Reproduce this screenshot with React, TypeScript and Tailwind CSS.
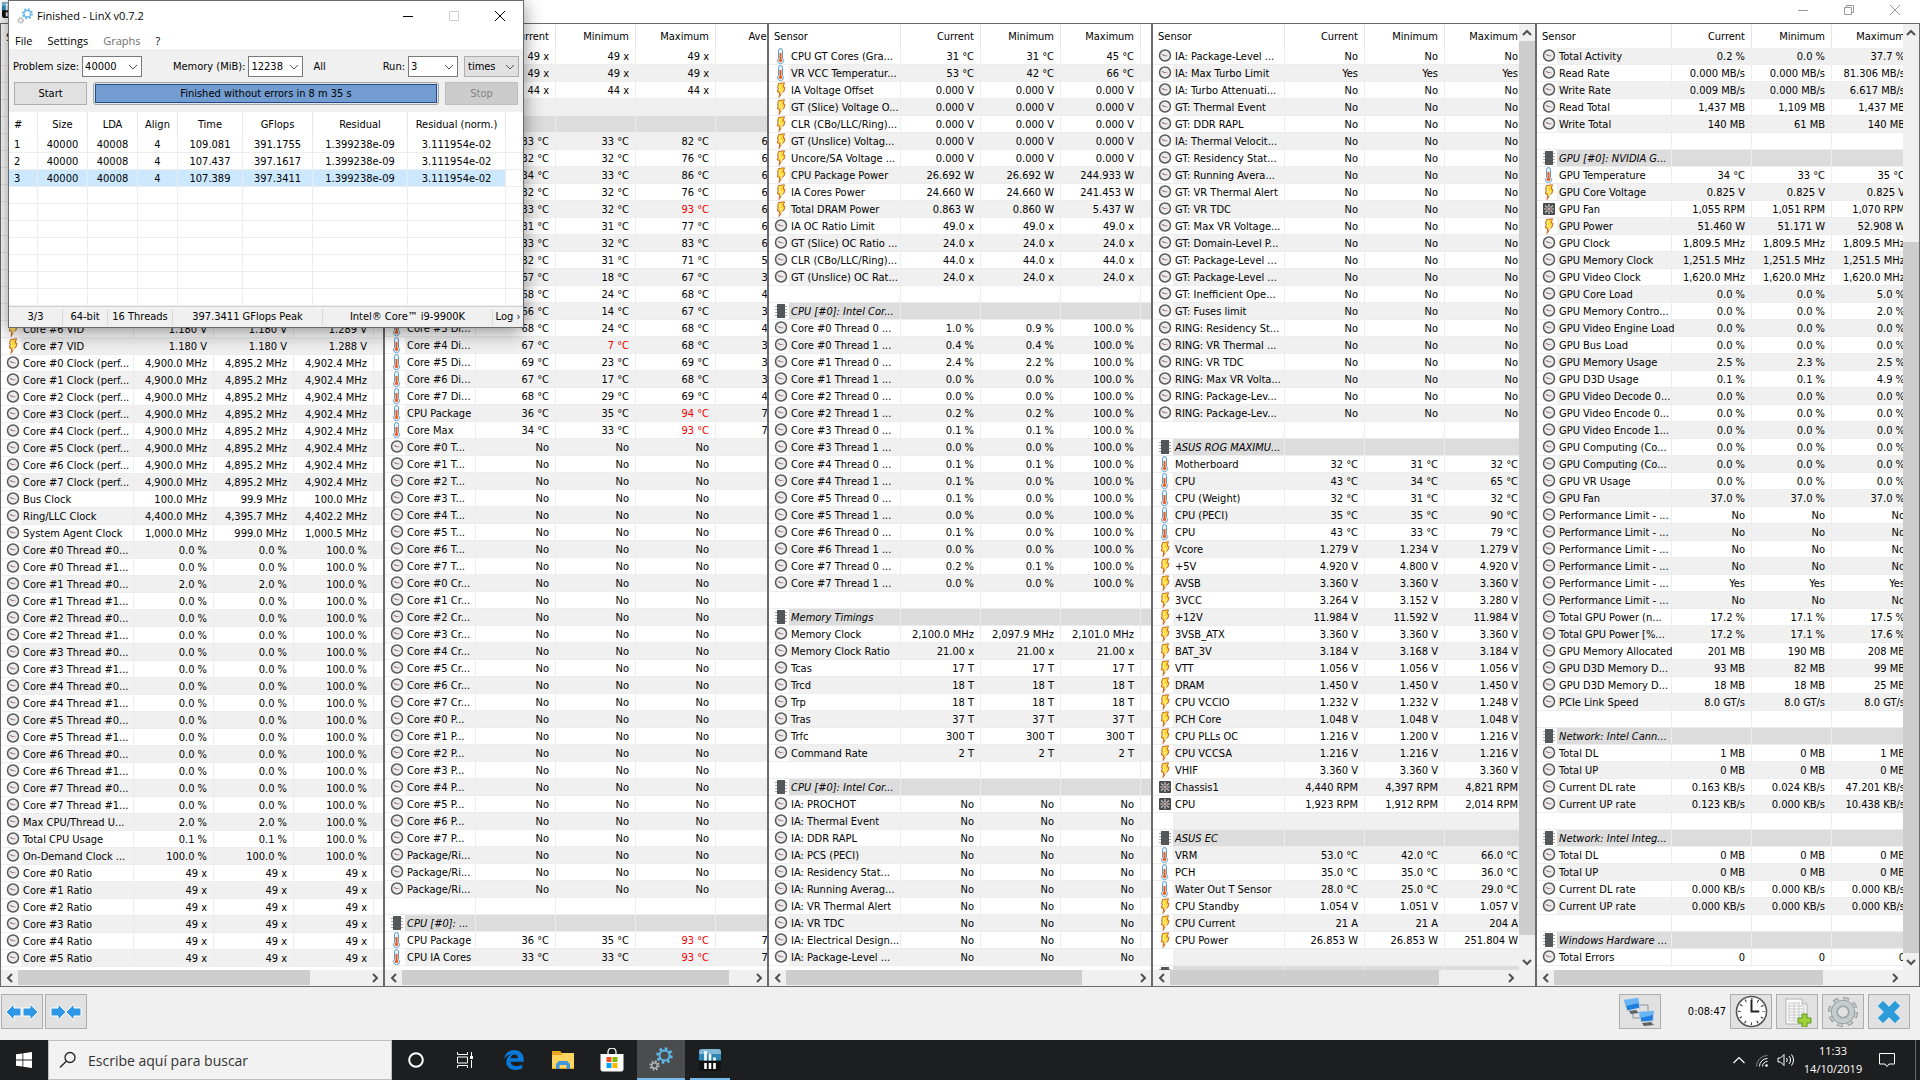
import type { ReactNode } from "react";

type IconName = "clock" | "temp" | "volt" | "fan" | "chip";

type Row = {
  kind: "row" | "group" | "blank";
  icon?: IconName;
  name?: string;
  values: string[];
  alert?: number;
};

type PaneData = {
  id: string;
  rows: Row[];
  cols: string;
  head: string;
  stripeOdd: boolean;
  thumb: number;
  vertical?: { top: number; size: number };
};

const row = (icon: IconName, name: string, values: string[], alert?: number): Row => ({ kind: "row", icon, name, values, alert });
const group = (name: string): Row => ({ kind: "group", icon: "chip", name, values: [] });
const blank = (): Row => ({ kind: "blank", values: [] });
const same = (value: string) => [value, value, value];
const unit = (suffix: string, ...values: string[]) => values.map((v) => `${v} ${suffix}`);
const no = (name: string) => row("clock", name, same("No"));
const cores = [0, 1, 2, 3, 4, 5, 6, 7];

const paneOne: Row[] = [
  ...Array.from({ length: 16 }, blank),
  row("volt", "Core #6 VID", unit("V", "1.180", "1.180", "1.289")),
  row("volt", "Core #7 VID", unit("V", "1.180", "1.180", "1.288")),
  ...cores.map((n) => row("clock", `Core #${n} Clock (perf...`, unit("MHz", "4,900.0", "4,895.2", "4,902.4"))),
  row("clock", "Bus Clock", unit("MHz", "100.0", "99.9", "100.0")),
  row("clock", "Ring/LLC Clock", unit("MHz", "4,400.0", "4,395.7", "4,402.2")),
  row("clock", "System Agent Clock", unit("MHz", "1,000.0", "999.0", "1,000.5")),
  ...cores.flatMap((n) => [
    row("clock", `Core #${n} Thread #0...`, n === 1 ? unit("%", "2.0", "2.0", "100.0") : unit("%", "0.0", "0.0", "100.0")),
    row("clock", `Core #${n} Thread #1...`, unit("%", "0.0", "0.0", "100.0")),
  ]),
  row("clock", "Max CPU/Thread U...", unit("%", "2.0", "2.0", "100.0")),
  row("clock", "Total CPU Usage", unit("%", "0.1", "0.1", "100.0")),
  row("clock", "On-Demand Clock ...", unit("%", "100.0", "100.0", "100.0")),
  ...[0, 1, 2, 3, 4, 5].map((n) => row("clock", `Core #${n} Ratio`, same("49 x"))),
];

const paneTwo: Row[] = [
  row("clock", "", same("49 x")),
  row("clock", "", same("49 x")),
  row("clock", "", same("44 x")),
  blank(),
  group(""),
  row("temp", "", unit("°C", "33", "33", "82", "60")),
  row("temp", "", unit("°C", "32", "32", "76", "60")),
  row("temp", "", unit("°C", "34", "33", "86", "60")),
  row("temp", "", unit("°C", "32", "32", "76", "60")),
  row("temp", "", unit("°C", "33", "32", "93", "60"), 2),
  row("temp", "", unit("°C", "31", "31", "77", "60")),
  row("temp", "", unit("°C", "33", "32", "83", "60")),
  row("temp", "", unit("°C", "32", "31", "71", "50")),
  row("temp", "", unit("°C", "67", "18", "67", "30")),
  row("temp", "", unit("°C", "68", "24", "68", "40")),
  row("temp", "", unit("°C", "66", "14", "67", "30")),
  row("temp", "Core #3 Di...", unit("°C", "68", "24", "68", "40")),
  row("temp", "Core #4 Di...", unit("°C", "67", "7", "68", "30"), 1),
  row("temp", "Core #5 Di...", unit("°C", "69", "23", "69", "30")),
  row("temp", "Core #6 Di...", unit("°C", "67", "17", "68", "30")),
  row("temp", "Core #7 Di...", unit("°C", "68", "29", "69", "40")),
  row("temp", "CPU Package", unit("°C", "36", "35", "94", "70"), 2),
  row("temp", "Core Max", unit("°C", "34", "33", "93", "70"), 2),
  ...cores.map((n) => no(`Core #${n} T...`)),
  ...cores.map((n) => no(`Core #${n} Cr...`)),
  ...cores.map((n) => no(`Core #${n} P...`)),
  no("Package/Ri..."),
  no("Package/Ri..."),
  no("Package/Ri..."),
  blank(),
  group("CPU [#0]: ..."),
  row("temp", "CPU Package", unit("°C", "36", "35", "93", "70"), 2),
  row("temp", "CPU IA Cores", unit("°C", "33", "33", "93", "70"), 2),
];

const threadUsage = [
  ["1.0", "0.9"], ["0.4", "0.4"], ["2.4", "2.2"], ["0.0", "0.0"],
  ["0.0", "0.0"], ["0.2", "0.2"], ["0.1", "0.1"], ["0.0", "0.0"],
  ["0.1", "0.1"], ["0.1", "0.0"], ["0.1", "0.0"], ["0.0", "0.0"],
  ["0.1", "0.0"], ["0.0", "0.0"], ["0.2", "0.1"], ["0.0", "0.0"],
];

const paneThree: Row[] = [
  row("temp", "CPU GT Cores (Gra...", unit("°C", "31", "31", "45")),
  row("temp", "VR VCC Temperatur...", unit("°C", "53", "42", "66")),
  row("volt", "IA Voltage Offset", same("0.000 V")),
  row("volt", "GT (Slice) Voltage O...", same("0.000 V")),
  row("volt", "CLR (CBo/LLC/Ring)...", same("0.000 V")),
  row("volt", "GT (Unslice) Voltag...", same("0.000 V")),
  row("volt", "Uncore/SA Voltage ...", same("0.000 V")),
  row("volt", "CPU Package Power", unit("W", "26.692", "26.692", "244.933")),
  row("volt", "IA Cores Power", unit("W", "24.660", "24.660", "241.453")),
  row("volt", "Total DRAM Power", unit("W", "0.863", "0.860", "5.437")),
  row("clock", "IA OC Ratio Limit", same("49.0 x")),
  row("clock", "GT (Slice) OC Ratio ...", same("24.0 x")),
  row("clock", "CLR (CBo/LLC/Ring)...", same("44.0 x")),
  row("clock", "GT (Unslice) OC Rat...", same("24.0 x")),
  blank(),
  group("CPU [#0]: Intel Cor..."),
  ...threadUsage.map(([cur, min], i) => row("clock", `Core #${Math.floor(i / 2)} Thread ${i % 2} ...`, unit("%", cur, min, "100.0"))),
  blank(),
  group("Memory Timings"),
  row("clock", "Memory Clock", unit("MHz", "2,100.0", "2,097.9", "2,101.0")),
  row("clock", "Memory Clock Ratio", same("21.00 x")),
  row("clock", "Tcas", same("17 T")),
  row("clock", "Trcd", same("18 T")),
  row("clock", "Trp", same("18 T")),
  row("clock", "Tras", same("37 T")),
  row("clock", "Trfc", same("300 T")),
  row("clock", "Command Rate", same("2 T")),
  blank(),
  group("CPU [#0]: Intel Cor..."),
  no("IA: PROCHOT"),
  no("IA: Thermal Event"),
  no("IA: DDR RAPL"),
  no("IA: PCS (PECI)"),
  no("IA: Residency Stat..."),
  no("IA: Running Averag..."),
  no("IA: VR Thermal Alert"),
  no("IA: VR TDC"),
  no("IA: Electrical Design..."),
  no("IA: Package-Level ..."),
];

const paneFour: Row[] = [
  no("IA: Package-Level ..."),
  row("clock", "IA: Max Turbo Limit", same("Yes")),
  no("IA: Turbo Attenuati..."),
  no("GT: Thermal Event"),
  no("GT: DDR RAPL"),
  no("IA: Thermal Velocit..."),
  no("GT: Residency Stat..."),
  no("GT: Running Avera..."),
  no("GT: VR Thermal Alert"),
  no("GT: VR TDC"),
  no("GT: Max VR Voltage..."),
  no("GT: Domain-Level P..."),
  no("GT: Package-Level ..."),
  no("GT: Package-Level ..."),
  no("GT: Inefficient Ope..."),
  no("GT: Fuses limit"),
  no("RING: Residency St..."),
  no("RING: VR Thermal ..."),
  no("RING: VR TDC"),
  no("RING: Max VR Volta..."),
  no("RING: Package-Lev..."),
  no("RING: Package-Lev..."),
  blank(),
  group("ASUS ROG MAXIMU..."),
  row("temp", "Motherboard", unit("°C", "32", "31", "32")),
  row("temp", "CPU", unit("°C", "43", "34", "65")),
  row("temp", "CPU (Weight)", unit("°C", "32", "31", "32")),
  row("temp", "CPU (PECI)", unit("°C", "35", "35", "90")),
  row("temp", "CPU", unit("°C", "43", "33", "79")),
  row("volt", "Vcore", unit("V", "1.279", "1.234", "1.279")),
  row("volt", "+5V", unit("V", "4.920", "4.800", "4.920")),
  row("volt", "AVSB", same("3.360 V")),
  row("volt", "3VCC", unit("V", "3.264", "3.152", "3.280")),
  row("volt", "+12V", unit("V", "11.984", "11.592", "11.984")),
  row("volt", "3VSB_ATX", same("3.360 V")),
  row("volt", "BAT_3V", unit("V", "3.184", "3.168", "3.184")),
  row("volt", "VTT", same("1.056 V")),
  row("volt", "DRAM", same("1.450 V")),
  row("volt", "CPU VCCIO", unit("V", "1.232", "1.232", "1.248")),
  row("volt", "PCH Core", same("1.048 V")),
  row("volt", "CPU PLLs OC", unit("V", "1.216", "1.200", "1.216")),
  row("volt", "CPU VCCSA", same("1.216 V")),
  row("volt", "VHIF", same("3.360 V")),
  row("fan", "Chassis1", unit("RPM", "4,440", "4,397", "4,821")),
  row("fan", "CPU", unit("RPM", "1,923", "1,912", "2,014")),
  blank(),
  group("ASUS EC"),
  row("temp", "VRM", unit("°C", "53.0", "42.0", "66.0")),
  row("temp", "PCH", unit("°C", "35.0", "35.0", "36.0")),
  row("temp", "Water Out T Sensor", unit("°C", "28.0", "25.0", "29.0")),
  row("volt", "CPU Standby", unit("V", "1.054", "1.051", "1.057")),
  row("volt", "CPU Current", unit("A", "21", "21", "204")),
  row("volt", "CPU Power", unit("W", "26.853", "26.853", "251.804")),
  blank(),
  group(""),
];

const paneFive: Row[] = [
  row("clock", "Total Activity", unit("%", "0.2", "0.0", "37.7")),
  row("clock", "Read Rate", unit("MB/s", "0.000", "0.000", "81.306")),
  row("clock", "Write Rate", unit("MB/s", "0.009", "0.000", "6.617")),
  row("clock", "Read Total", unit("MB", "1,437", "1,109", "1,437")),
  row("clock", "Write Total", unit("MB", "140", "61", "140")),
  blank(),
  group("GPU [#0]: NVIDIA G..."),
  row("temp", "GPU Temperature", unit("°C", "34", "33", "35")),
  row("volt", "GPU Core Voltage", same("0.825 V")),
  row("fan", "GPU Fan", unit("RPM", "1,055", "1,051", "1,070")),
  row("volt", "GPU Power", unit("W", "51.460", "51.171", "52.908")),
  row("clock", "GPU Clock", same("1,809.5 MHz")),
  row("clock", "GPU Memory Clock", same("1,251.5 MHz")),
  row("clock", "GPU Video Clock", same("1,620.0 MHz")),
  row("clock", "GPU Core Load", unit("%", "0.0", "0.0", "5.0")),
  row("clock", "GPU Memory Contro...", unit("%", "0.0", "0.0", "2.0")),
  row("clock", "GPU Video Engine Load", same("0.0 %")),
  row("clock", "GPU Bus Load", same("0.0 %")),
  row("clock", "GPU Memory Usage", unit("%", "2.5", "2.3", "2.5")),
  row("clock", "GPU D3D Usage", unit("%", "0.1", "0.1", "4.9")),
  row("clock", "GPU Video Decode 0...", same("0.0 %")),
  row("clock", "GPU Video Encode 0...", same("0.0 %")),
  row("clock", "GPU Video Encode 1...", same("0.0 %")),
  row("clock", "GPU Computing (Co...", same("0.0 %")),
  row("clock", "GPU Computing (Co...", same("0.0 %")),
  row("clock", "GPU VR Usage", same("0.0 %")),
  row("clock", "GPU Fan", same("37.0 %")),
  no("Performance Limit - ..."),
  no("Performance Limit - ..."),
  no("Performance Limit - ..."),
  no("Performance Limit - ..."),
  row("clock", "Performance Limit - ...", same("Yes")),
  no("Performance Limit - ..."),
  row("clock", "Total GPU Power (n...", unit("%", "17.2", "17.1", "17.5")),
  row("clock", "Total GPU Power [%...", unit("%", "17.2", "17.1", "17.6")),
  row("clock", "GPU Memory Allocated", unit("MB", "201", "190", "208")),
  row("clock", "GPU D3D Memory D...", unit("MB", "93", "82", "99")),
  row("clock", "GPU D3D Memory D...", unit("MB", "18", "18", "25")),
  row("clock", "PCIe Link Speed", same("8.0 GT/s")),
  blank(),
  group("Network: Intel Cann..."),
  row("clock", "Total DL", unit("MB", "1", "0", "1")),
  row("clock", "Total UP", same("0 MB")),
  row("clock", "Current DL rate", unit("KB/s", "0.163", "0.024", "47.201")),
  row("clock", "Current UP rate", unit("KB/s", "0.123", "0.000", "10.438")),
  blank(),
  group("Network: Intel Integ..."),
  row("clock", "Total DL", same("0 MB")),
  row("clock", "Total UP", same("0 MB")),
  row("clock", "Current DL rate", same("0.000 KB/s")),
  row("clock", "Current UP rate", same("0.000 KB/s")),
  blank(),
  group("Windows Hardware ..."),
  row("clock", "Total Errors", same("0")),
];

const panes: PaneData[] = [
  { id: "p1", rows: paneOne, cols: "w-[133px]", head: "h-[25px]", stripeOdd: true, thumb: 84 },
  { id: "p2", rows: paneTwo, cols: "w-[91px]", head: "h-6", stripeOdd: true, thumb: 94 },
  { id: "p3", rows: paneThree, cols: "w-[132px]", head: "h-6", stripeOdd: true, thumb: 85 },
  { id: "p4", rows: paneFour, cols: "w-[132px]", head: "h-6", stripeOdd: true, thumb: 81, vertical: { top: 0, size: 98 } },
  { id: "p5", rows: paneFive, cols: "w-[135px]", head: "h-6", stripeOdd: false, thumb: 81, vertical: { top: 22, size: 78 } },
];

function RowIcon({ name }: { name: IconName }) {
  if (name === "temp") {
    return (
      <svg viewBox="0 0 16 16" className="size-4 shrink-0">
        <path d="M5.500 2.500a2 2 0 0 1 4 0v8a3 3 0 1 1-4 0z" fill="#e4f2fb" stroke="#5f9ccb" />
        <path d="M7.500 5v7" stroke="#ee5a12" strokeWidth="2" />
        <circle cx="7.500" cy="12.500" r="1.600" fill="#ee5a12" />
      </svg>
    );
  }
  if (name === "volt") {
    return (
      <svg viewBox="0 0 16 16" className="size-4 shrink-0">
        <path d="M5.500 1.500L11.500.8 10 5l2 .2-1 4-1.500.5L6 15.500l.8-5.200-2.500-.3 1-4-.8-.3z" fill="#ffd92e" stroke="#c8682a" />
        <path d="M7 2.500L6.500 8h3L8 12" fill="none" stroke="#fff6b0" />
      </svg>
    );
  }
  if (name === "fan") {
    return (
      <svg viewBox="0 0 16 16" className="size-4 shrink-0">
        <rect x="2" y="2" width="12" height="12" rx="1" fill="#4b4b4b" />
        <path d="M8 3v3.500M8 9.500V13M3 8h3.500M9.500 8H13M4 4.500l2.500 2M12 4.500l-2.500 2M4 11.500l2.500-2M12 11.500l-2.500-2" stroke="#cfcfcf" strokeWidth="1.200" />
        <circle cx="8" cy="8" r="1.300" fill="#d9a0a0" />
      </svg>
    );
  }
  if (name === "chip") {
    return (
      <svg viewBox="0 0 16 16" className="size-4 shrink-0">
        <path d="M2 3.500h12M2 6.500h12M2 9.500h12M2 12.500h12" stroke="#a8a8a8" />
        <rect x="4" y="1" width="8" height="14" fill="#54575a" />
      </svg>
    );
  }
  return (
    <svg viewBox="0 0 16 16" className="size-4 shrink-0">
      <circle cx="8" cy="7.500" r="5.500" fill="#ebebeb" stroke="#5a5a5a" strokeWidth="1.500" />
      <path d="M5 6.500l3 1.200" stroke="#666" />
      <path d="M8 7.800h2.500" stroke="#b98a80" />
    </svg>
  );
}

function Chevron({ d }: { d: string }) {
  return (
    <svg viewBox="0 0 10 10" className="size-2.5 text-[#505050]" fill="none" stroke="currentColor" strokeWidth="2">
      <path d={d} />
    </svg>
  );
}

function HorizontalBar({ thumb }: { thumb: number }) {
  return (
    <div className="flex h-4 flex-1 bg-[#f0f0f0]">
      <button aria-label="Scroll left" className="flex w-[17px] items-center justify-center"><Chevron d="M7 1L3 5l4 4" /></button>
      <div className="flex-1"><div className="h-[15px] bg-[#cdcdcd]" style={{ width: `${thumb}%` }} /></div>
      <button aria-label="Scroll right" className="flex w-[17px] items-center justify-center"><Chevron d="M3 1l4 4-4 4" /></button>
    </div>
  );
}

function VerticalBar({ top, size }: { top: number; size: number }) {
  return (
    <div className="flex w-4 shrink-0 flex-col bg-[#f0f0f0]">
      <button aria-label="Scroll up" className="flex h-[17px] items-center justify-center"><Chevron d="M1 7l4-4 4 4" /></button>
      <div className="flex flex-1 flex-col">
        <div style={{ height: `${top}%` }} />
        <div className="bg-[#cdcdcd]" style={{ height: `${size}%` }} />
      </div>
      <button aria-label="Scroll down" className="flex h-[17px] items-center justify-center"><Chevron d="M1 3l4 4 4-4" /></button>
    </div>
  );
}

const cellBg = (item: Row, striped: boolean) => {
  if (item.kind === "group") return "bg-[#dcdcdc]";
  return striped ? "bg-[#f0f0f0]" : "bg-white";
};

function SensorPane({ pane }: { pane: PaneData }) {
  return (
    <section className="flex min-w-0 flex-1 flex-col border border-[#6a6a6e] bg-white">
      <div className="flex min-h-0 flex-1">
        <div className="min-w-0 flex-1 overflow-hidden">
          <table className="w-[460px] table-fixed border-separate border-spacing-0 leading-[14px]">
            <thead>
              <tr className={pane.head}>
                <th className={`${pane.cols} border-r border-[#e5e5e5] p-0 pt-0.5 pl-[5px] text-left font-normal`}>Sensor</th>
                {["Current", "Minimum", "Maximum", "Average"].map((label) => (
                  <th key={label} className="w-20 border-r border-[#e5e5e5] p-0 pt-0.5 pr-1.5 text-right font-normal">{label}</th>
                ))}
                <th />
              </tr>
            </thead>
            <tbody>
              {pane.rows.map((item, i) => {
                const bg = cellBg(item, (i % 2 === 1) === pane.stripeOdd);
                return (
                  <tr key={i} className="h-[17px]">
                    <td className="border-r border-b border-[#ededed] p-0">
                      <div className="flex h-4 items-center">
                        <span className="flex h-4 w-5 shrink-0 justify-end overflow-hidden bg-white">{item.icon && <RowIcon name={item.icon} />}</span>
                        <span className={`h-4 min-w-0 flex-1 pt-0.5 pl-0.5 whitespace-nowrap ${bg} ${item.kind === "group" ? "italic" : ""}`}>{item.name}</span>
                      </div>
                    </td>
                    {[0, 1, 2, 3].map((col) => (
                      <td key={col} className={`border-r border-b border-[#ededed] p-0 pt-0.5 pr-1.5 text-right whitespace-nowrap ${bg} ${item.alert === col ? "text-[#f00000]" : ""}`}>{item.values[col]}</td>
                    ))}
                    <td className={`border-b border-[#ededed] p-0 ${bg}`} />
                  </tr>
                );
              })}
            </tbody>
          </table>
        </div>
        {pane.vertical && <VerticalBar top={pane.vertical.top} size={pane.vertical.size} />}
      </div>
      <div className="flex bg-[#f0f0f0]">
        <HorizontalBar thumb={pane.thumb} />
        {pane.vertical && <div className="w-4" />}
      </div>
    </section>
  );
}

function GearsIcon({ className }: { className: string }) {
  return (
    <svg viewBox="0 0 24 24" className={className} fill="none">
      <circle cx="15.500" cy="8.500" r="7" stroke="#5cb8e8" strokeWidth="2.600" strokeDasharray="2.750 2.750" />
      <circle cx="15.500" cy="8.500" r="5" stroke="#5cb8e8" strokeWidth="2" />
      <circle cx="5.500" cy="18.500" r="4.200" stroke="#b4b4b4" strokeWidth="2" strokeDasharray="1.650 1.650" />
      <circle cx="5.500" cy="18.500" r="2.800" stroke="#b4b4b4" strokeWidth="1.500" />
    </svg>
  );
}

function MonitorBarsIcon({ className }: { className: string }) {
  return (
    <svg viewBox="0 0 22 22" className={className}>
      <rect width="22" height="22" rx="3" fill="#111" />
      <path d="M0 3a3 3 0 0 1 3-3h16a3 3 0 0 1 3 3v8.500H0z" fill="#2c87b5" />
      <path d="M0 3a3 3 0 0 1 3-3h16a3 3 0 0 1 3 3v2H0z" fill="#7fb9d6" />
      <path d="M6.500 2v9.500M11 5v6.500M15.500 8.500v3M6.500 14v6M11 14v6M15.500 14v6" stroke="#fff" strokeWidth="2.600" />
    </svg>
  );
}

function ComboBox({ id, label, value, width }: { id: string; label: string; value: string; width: string }) {
  return (
    <>
      <label htmlFor={id} className="whitespace-nowrap">{label}</label>
      <div className={`${width} ml-[3px] flex h-[21px] items-center border border-[#7a7a7a] bg-white`}>
        <input id={id} defaultValue={value} className="min-w-0 flex-1 bg-transparent pl-0.5 outline-none" />
        <button aria-label={`${label} options`} className="flex w-4 justify-center">
          <svg viewBox="0 0 10 10" className="size-2.5" fill="none" stroke="#555"><path d="M1 3l4 4 4-4" /></svg>
        </button>
      </div>
    </>
  );
}

const runColumns = [
  { label: "#", width: "w-[29px]" },
  { label: "Size", width: "w-[50px]" },
  { label: "LDA", width: "w-[50px]" },
  { label: "Align", width: "w-[40px]" },
  { label: "Time", width: "w-[65px]" },
  { label: "GFlops", width: "w-[70px]" },
  { label: "Residual", width: "w-[95px]" },
  { label: "Residual (norm.)", width: "w-[98px]" },
];

const runs = [
  ["1", "40000", "40008", "4", "109.081", "391.1755", "1.399238e-09", "3.111954e-02"],
  ["2", "40000", "40008", "4", "107.437", "397.1617", "1.399238e-09", "3.111954e-02"],
  ["3", "40000", "40008", "4", "107.389", "397.3411", "1.399238e-09", "3.111954e-02"],
  ...Array.from({ length: 7 }, () => ["", "", "", "", "", "", "", ""]),
];

function LinXWindow() {
  return (
    <div className="absolute top-0 left-2 w-[516px] border border-[#6b6b6b] bg-white shadow-[0_4px_18px_rgba(0,0,0,0.45)]">
      <div className="flex h-[29px] items-center pl-2">
        <GearsIcon className="size-4" />
        <h1 className="ml-1 flex-1 font-['Open_Sans','Noto_Sans',sans-serif] text-[11px]">Finished - LinX v0.7.2</h1>
        <button aria-label="Minimize" className="flex w-[46px] justify-center"><svg viewBox="0 0 10 10" className="size-2.5" stroke="#000"><path d="M0 5.500h10" /></svg></button>
        <button aria-label="Maximize" className="flex w-[46px] justify-center"><svg viewBox="0 0 10 10" className="size-2.5" fill="none" stroke="#ccc"><path d="M.5.5h9v9h-9z" /></svg></button>
        <button aria-label="Close" className="flex w-[46px] justify-center"><svg viewBox="0 0 10 10" className="size-2.5" stroke="#000"><path d="M0 0l10 10M10 0L0 10" /></svg></button>
      </div>
      <nav className="flex h-[19px] items-center gap-[15px] pt-0.5 pl-1.5 font-['Open_Sans','Noto_Sans',sans-serif] text-[11px]">
        <button>File</button>
        <button>Settings</button>
        <button className="text-[#6d6d6d]">Graphs</button>
        <button>?</button>
      </nav>
      <div className="bg-[#f0f0f0] px-1 pt-[7px] pb-[7px]">
        <div className="flex items-center">
          <ComboBox id="size" label="Problem size:" value="40000" width="w-[60px]" />
          <div className="flex-1" />
          <ComboBox id="memory" label="Memory (MiB):" value="12238" width="w-[55px]" />
          <button className="ml-2.5">All</button>
          <div className="w-[57px]" />
          <ComboBox id="run" label="Run:" value="3" width="w-[50px]" />
          <div className="relative ml-1.5">
            <select aria-label="Run unit" className="h-[21px] w-[55px] appearance-none border border-[#adadad] bg-[#e1e1e1] pl-[3px]"><option>times</option></select>
            <svg viewBox="0 0 10 10" className="pointer-events-none absolute top-1.5 right-1 size-2.5" fill="none" stroke="#555"><path d="M1 3l4 4 4-4" /></svg>
          </div>
        </div>
        <div className="mt-[5px] flex h-[23px] gap-1.5 px-px">
          <button className="w-[73px] border border-[#adadad] bg-[#e1e1e1]">Start</button>
          <div role="progressbar" aria-valuenow={100} className="flex flex-1 rounded-[3px] border border-[#a5a5a5] bg-[#e6e6e6] p-px">
            <div className="flex flex-1 items-center justify-center border border-[#1f4a8c] bg-[#739dd0]">Finished without errors in 8 m 35 s</div>
          </div>
          <button disabled className="w-[73px] border border-[#bfbfbf] bg-[#ccc] text-[#838383]">Stop</button>
        </div>
      </div>
      <table className="w-full table-fixed border-separate border-spacing-0 leading-[14px]">
        <thead>
          <tr className="h-6">
            {runColumns.map((col, i) => (
              <th key={col.label} className={`${col.width} border-r border-[#e5e5e5] p-0 pt-0.5 font-normal whitespace-nowrap ${i === 0 ? "pl-[5px] text-left" : ""}`}>{col.label}</th>
            ))}
            <th />
          </tr>
        </thead>
        <tbody>
          {runs.map((cells, r) => (
            <tr key={r} className="h-[17px]">
              {cells.map((cell, i) => (
                <td key={i} className={`h-[17px] border-r border-b border-[#ededed] p-0 pt-0.5 ${i === 0 ? "pl-[5px]" : "text-center"} ${r === 2 ? "bg-[#cce8ff]" : ""}`}>{cell}</td>
              ))}
              <td className="border-b border-[#ededed]" />
            </tr>
          ))}
        </tbody>
      </table>
      <footer className="flex h-[21px] items-center border-t border-[#d0d0d0] bg-[#f0f0f0] text-center whitespace-nowrap">
        <span className="w-[54px] border-r border-[#d7d7d7]">3/3</span>
        <span className="w-[45px] border-r border-[#d7d7d7]">64-bit</span>
        <span className="w-[65px] border-r border-[#d7d7d7]">16 Threads</span>
        <span className="w-[150px] border-r border-[#d7d7d7]">397.3411 GFlops Peak</span>
        <span className="w-[170px] border-r border-[#d7d7d7]">Intel® Core™ i9-9900K</span>
        <button className="flex-1">Log ›</button>
      </footer>
    </div>
  );
}

function ToolButton({ label, children }: { label: string; children: ReactNode }) {
  return <button aria-label={label} className="flex h-[35px] w-[42px] items-center justify-center border border-[#adadad] bg-[#e1e1e1]">{children}</button>;
}

function Toolbar() {
  return (
    <div className="flex h-[53px] items-start gap-1 bg-[#f0f0f0] pt-[7px] pr-2.5 pl-px">
      <div className="flex gap-0.5">
        <ToolButton label="Expand columns">
          <svg viewBox="0 0 34 18" className="h-[18px] w-[34px]" fill="#2f97e8" stroke="#fff"><path d="M1 9l8-8v4h7v8H9v4zM33 9l-8-8v4h-7v8h7v4z" /></svg>
        </ToolButton>
        <ToolButton label="Shrink columns">
          <svg viewBox="0 0 34 18" className="h-[18px] w-[34px]" fill="#2f97e8" stroke="#fff"><path d="M17 9L9 1v4H2v8h7v4zM17 9l8-8v4h7v8h-7v4z" /></svg>
        </ToolButton>
      </div>
      <div className="flex-1" />
      <ToolButton label="Remote monitoring">
        <svg viewBox="0 0 34 30" className="h-[30px] w-[34px]">
          <path d="M16 8h9v7M10 14v7h8" fill="none" stroke="#8a8f94" />
          <path d="M1 3l14-2 2 10-13 3z" fill="#1f7fdc" stroke="#c9d4dc" />
          <path d="M1 3l14-2 1 5L3 9z" fill="#69b4f5" />
          <path d="M6 14l7-1 3 3-8 1z" fill="#5b6268" />
          <path d="M16 15l15-1-1 10-12 1z" fill="#1f7fdc" stroke="#c9d4dc" />
          <path d="M16 15l15-1-1 4-13 3z" fill="#69b4f5" />
          <path d="M19 26l9-1 3 3-10 1z" fill="#5b6268" />
        </svg>
      </ToolButton>
      <span className="flex h-[35px] w-[61px] items-center justify-end">0:08:47</span>
      <ToolButton label="Reset timer">
        <svg viewBox="0 0 34 34" className="size-[33px]" fill="none" stroke="#222">
          <circle cx="17" cy="17" r="15.500" fill="#fff" strokeWidth="1.600" stroke="#555" />
          <circle cx="17" cy="17" r="12.500" strokeWidth="3" strokeDasharray="1 5.545" strokeDashoffset=".5" />
          <path d="M17 5v12h8" strokeWidth="2" />
        </svg>
      </ToolButton>
      <ToolButton label="Log to file">
        <svg viewBox="0 0 30 30" className="size-[30px]">
          <path d="M4 2h16l5 5v20H4z" fill="#fafafa" stroke="#b4b4b4" />
          <path d="M20 2v5h5" fill="#e2e2e2" stroke="#b4b4b4" />
          <path d="M7 6h11M7 9h15M7 12h15M7 15h15M7 18h15M7 21h15M7 24h15M7 6v18M12 6v18M17 6v18M22 9v15" stroke="#c9c9c9" fill="none" />
          <path d="M20 17h5v4h4v5h-4v4h-5v-4h-4v-5h4z" fill="#9ed13a" stroke="#5c9a1a" />
        </svg>
      </ToolButton>
      <ToolButton label="Settings">
        <svg viewBox="0 0 32 32" className="size-8" fill="none">
          <circle cx="16" cy="16" r="12.500" stroke="#8e9698" strokeWidth="5" strokeDasharray="5.300 4.518" />
          <circle cx="16" cy="16" r="12.300" stroke="#c6cccd" strokeWidth="3.500" strokeDasharray="4.300 5.361" strokeDashoffset="-.5" />
          <circle cx="16" cy="16" r="8.500" stroke="#8e9698" strokeWidth="7" />
          <circle cx="16" cy="16" r="8.500" stroke="#c6cccd" strokeWidth="5.500" />
          <circle cx="16" cy="16" r="6" stroke="#a1a8aa" strokeWidth="1.500" />
        </svg>
      </ToolButton>
      <ToolButton label="Close">
        <svg viewBox="0 0 24 24" className="size-6"><path d="M6 1l6 6 6-6 5 5-6 6 6 6-5 5-6-6-6 6-5-5 6-6-6-6z" fill="#2c9bd8" stroke="#63bdea" /></svg>
      </ToolButton>
    </div>
  );
}

function TaskButton({ label, className = "", children }: { label: string; className?: string; children: ReactNode }) {
  return <button aria-label={label} className={`relative flex h-10 w-12 items-center justify-center ${className}`}>{children}</button>;
}

function Taskbar() {
  return (
    <footer className="flex h-10 items-center bg-[#1d1e20] font-['Open_Sans','Noto_Sans',sans-serif] text-white">
      <TaskButton label="Start">
        <svg viewBox="0 0 16 16" className="size-4" fill="#fff"><path d="M0 2.300l6.500-.9v6.200H0zM7.300 1.300L16 0v7.600H7.300zM0 8.400h6.500v6.200L0 13.700zM7.300 8.400H16V16l-8.700-1.300z" /></svg>
      </TaskButton>
      <label className="flex h-10 w-[344px] items-center border border-[#bdbdbd] bg-[#f2f2f2] pl-2.5">
        <svg viewBox="0 0 18 18" className="size-[18px]" fill="none" stroke="#222" strokeWidth="1.300"><circle cx="11" cy="6.500" r="5" /><path d="M7.300 10.200L1 16.500" /></svg>
        <input aria-label="Buscar" placeholder="Escribe aquí para buscar" className="ml-[11px] min-w-0 flex-1 bg-transparent pt-px text-sm text-[#333] outline-none placeholder:text-[#333]" />
      </label>
      <div className="flex gap-px">
        <TaskButton label="Cortana"><svg viewBox="0 0 16 16" className="size-4" fill="none" stroke="#fff" strokeWidth="2"><circle cx="8" cy="8" r="6.800" /></svg></TaskButton>
        <TaskButton label="Task view">
          <svg viewBox="0 0 16 16" className="size-4" fill="none" stroke="#fff"><path d="M.5 0v2.500h10V0M.5 5h10v6H.5zM.5 16v-2.500h10V16M14.500 0v4M14.500 8v8" /><path d="M13 5.500h3" strokeWidth="3" /></svg>
        </TaskButton>
        <TaskButton label="Edge">
          <svg viewBox="0 0 20 20" className="size-5"><path d="M.2 9C1 3.500 5 0 10.300 0 16 0 19.800 4 19.800 9.600v2.200H6.600c.2 3 2.700 4.400 5.600 4.400 2.300 0 4.400-.7 6-1.700v4.100C16.500 19.500 14.300 20 11.800 20 6 20 2.300 16.800 2.300 12c0-3.400 2-6.300 5.100-7.700C5.200 4.600 2.300 6 .2 9zM6.700 8.200h7.200C13.900 6 12.700 4.500 10.500 4.500 8.400 4.500 7 6.200 6.700 8.200z" fill="#0a78d7" /></svg>
        </TaskButton>
        <TaskButton label="File explorer">
          <svg viewBox="0 0 22 18" className="h-[18px] w-[22px]"><path d="M0 0h8l2 2h12v16H0z" fill="#e9a61c" /><path d="M0 4h9l2-2h11v15H0z" fill="#fbd55f" /><path d="M4 18v-5l3-3h8l3 3v5h-3.500v-4h-7v4z" fill="#3f96dc" /></svg>
        </TaskButton>
        <TaskButton label="Store">
          <svg viewBox="0 0 24 24" className="size-6"><path d="M8 7V4a4 4 0 0 1 8 0v3" fill="none" stroke="#fff" strokeWidth="1.300" /><path d="M.5 6h23v16l-1.500 1.500h-20L.5 22z" fill="#fff" /><path d="M6.500 9h5v5h-5z" fill="#f25022" /><path d="M12.500 9h5v5h-5z" fill="#7fba00" /><path d="M6.500 15h5v5h-5z" fill="#00a4ef" /><path d="M12.500 15h5v5h-5z" fill="#ffb900" /></svg>
        </TaskButton>
        <TaskButton label="LinX" className="border-b-2 border-[#76b9ed] bg-[#4b4c4d]"><GearsIcon className="size-6" /></TaskButton>
        <TaskButton label="HWiNFO">
          <MonitorBarsIcon className="size-[22px]" />
          <span className="absolute inset-x-1 bottom-0 h-0.5 bg-[#76b9ed]" />
        </TaskButton>
      </div>
      <div className="flex-1" />
      <button aria-label="Show hidden icons" className="mr-2.5"><svg viewBox="0 0 12 8" className="h-2 w-3" fill="none" stroke="#fff" strokeWidth="1.200"><path d="M.5 7L6 1.500 11.500 7" /></svg></button>
      <svg viewBox="0 0 14 14" className="mr-2 size-3.5" fill="none" stroke="#fff">
        <path d="M7.500 13.500a5 5 0 0 1 5-5M4.500 13.500a8 8 0 0 1 8-8" />
        <path d="M1.500 13.500a11 11 0 0 1 11-11" stroke="#888" />
        <circle cx="11.500" cy="12.500" r="1.300" fill="#fff" stroke="none" />
      </svg>
      <svg viewBox="0 0 18 14" className="mr-2 h-3.5 w-[18px]" fill="none" stroke="#fff"><path d="M1 5h2.500L7 1.500v11L3.500 9H1zM9.500 5a3 3 0 0 1 0 4M12 3a6 6 0 0 1 0 8M14.500 1.500a8.500 8.500 0 0 1 0 11" /></svg>
      <button className="flex w-[60px] flex-col items-center text-[11px] leading-[18px]"><span>11:33</span><span>14/10/2019</span></button>
      <button aria-label="Notifications" className="mr-5 ml-4"><svg viewBox="0 0 16 16" className="size-4" fill="none" stroke="#fff"><path d="M.5 1.500h15v10.500H10l-2 2.500-2-2.500H.5z" /></svg></button>
      <div className="h-10 w-[5px] border-l border-[#6a6a6a]" />
    </footer>
  );
}

export default function App() {
  return (
    <div className="relative flex h-screen flex-col overflow-hidden bg-white font-['DejaVu_Sans_Condensed','DejaVu_Sans',sans-serif] text-[11px] leading-4 text-black">
      <header className="flex h-[23px] items-center bg-white pr-[3px] pb-[3px] pl-0.5">
        <MonitorBarsIcon className="size-4" />
        <div className="flex-1" />
        <button aria-label="Minimize" className="flex w-[46px] justify-center"><svg viewBox="0 0 10 10" className="size-2.5" stroke="#999"><path d="M0 5.500h10" /></svg></button>
        <button aria-label="Restore" className="flex w-[46px] justify-center"><svg viewBox="0 0 10 10" className="size-2.5" fill="none" stroke="#999"><path d="M.5 2.500h7v7h-7zM2.500 2.500v-2h7v7h-2" /></svg></button>
        <button aria-label="Close" className="flex w-[45px] justify-center"><svg viewBox="0 0 10 10" className="size-2.5" stroke="#999"><path d="M0 0l10 10M10 0L0 10" /></svg></button>
      </header>
      <main className="flex min-h-0 flex-1">
        {panes.map((pane) => <SensorPane key={pane.id} pane={pane} />)}
      </main>
      <Toolbar />
      <Taskbar />
      <LinXWindow />
    </div>
  );
}
